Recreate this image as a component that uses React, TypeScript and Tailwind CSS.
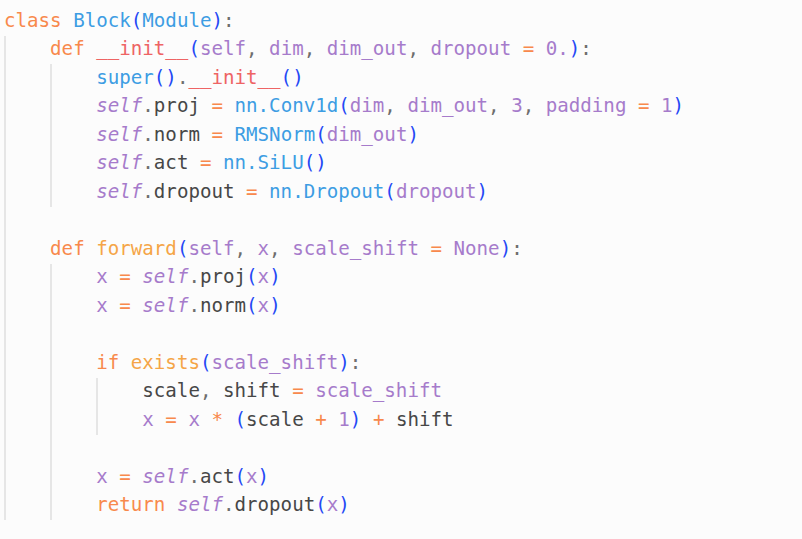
import React from 'react';

type Kind = 'kw' | 'cls' | 'fn' | 'dun' | 'par' | 'var' | 'op' | 'pun' | 'self' | 'attr' | 'sp';

const colors: Record<Kind, string> = {
  kw: 'text-[#f8894c]',
  cls: 'text-[#3d9de3]',
  fn: 'text-[#f5a547]',
  dun: 'text-[#ee6464]',
  par: 'text-[#2448f5]',
  var: 'text-[#a67bcb]',
  op: 'text-[#f8894c]',
  pun: 'text-[#6e6e6e]',
  self: 'text-[#a67bcb] italic',
  attr: 'text-[#474747]',
  sp: '',
};

type Token = [Kind, string];

interface Line {
  guides: number;
  tokens: Token[];
}

const S: Token = ['sp', ' '];
const EQ: Token[] = [S, ['op', '='], S];
const C: Token[] = [['pun', ','], S];

const lines: Line[] = [
  { guides: 0, tokens: [['kw', 'class'], S, ['cls', 'Block'], ['par', '('], ['cls', 'Module'], ['par', ')'], ['pun', ':']] },
  {
    guides: 1,
    tokens: [
      ['kw', 'def'], S, ['dun', '__init__'], ['par', '('], ['var', 'self'], ...C, ['var', 'dim'], ...C,
      ['var', 'dim_out'], ...C, ['var', 'dropout'], ...EQ, ['var', '0.'], ['par', ')'], ['pun', ':'],
    ],
  },
  { guides: 2, tokens: [['cls', 'super'], ['par', '()'], ['pun', '.'], ['dun', '__init__'], ['par', '()']] },
  {
    guides: 2,
    tokens: [
      ['self', 'self'], ['pun', '.'], ['attr', 'proj'], ...EQ, ['cls', 'nn.Conv1d'], ['par', '('], ['var', 'dim'], ...C,
      ['var', 'dim_out'], ...C, ['var', '3'], ...C, ['var', 'padding'], ...EQ, ['var', '1'], ['par', ')'],
    ],
  },
  { guides: 2, tokens: [['self', 'self'], ['pun', '.'], ['attr', 'norm'], ...EQ, ['cls', 'RMSNorm'], ['par', '('], ['var', 'dim_out'], ['par', ')']] },
  { guides: 2, tokens: [['self', 'self'], ['pun', '.'], ['attr', 'act'], ...EQ, ['cls', 'nn.SiLU'], ['par', '()']] },
  { guides: 2, tokens: [['self', 'self'], ['pun', '.'], ['attr', 'dropout'], ...EQ, ['cls', 'nn.Dropout'], ['par', '('], ['var', 'dropout'], ['par', ')']] },
  { guides: 1, tokens: [] },
  {
    guides: 1,
    tokens: [
      ['kw', 'def'], S, ['fn', 'forward'], ['par', '('], ['var', 'self'], ...C, ['var', 'x'], ...C,
      ['var', 'scale_shift'], ...EQ, ['var', 'None'], ['par', ')'], ['pun', ':'],
    ],
  },
  { guides: 2, tokens: [['var', 'x'], ...EQ, ['self', 'self'], ['pun', '.'], ['attr', 'proj'], ['par', '('], ['var', 'x'], ['par', ')']] },
  { guides: 2, tokens: [['var', 'x'], ...EQ, ['self', 'self'], ['pun', '.'], ['attr', 'norm'], ['par', '('], ['var', 'x'], ['par', ')']] },
  { guides: 2, tokens: [] },
  { guides: 2, tokens: [['kw', 'if'], S, ['fn', 'exists'], ['par', '('], ['var', 'scale_shift'], ['par', ')'], ['pun', ':']] },
  { guides: 3, tokens: [['attr', 'scale'], ...C, ['attr', 'shift'], ...EQ, ['var', 'scale_shift']] },
  {
    guides: 3,
    tokens: [
      ['var', 'x'], ...EQ, ['var', 'x'], S, ['op', '*'], S, ['par', '('], ['attr', 'scale'], S, ['op', '+'], S,
      ['var', '1'], ['par', ')'], S, ['op', '+'], S, ['attr', 'shift'],
    ],
  },
  { guides: 2, tokens: [] },
  { guides: 2, tokens: [['var', 'x'], ...EQ, ['self', 'self'], ['pun', '.'], ['attr', 'act'], ['par', '('], ['var', 'x'], ['par', ')']] },
  { guides: 2, tokens: [['kw', 'return'], S, ['self', 'self'], ['pun', '.'], ['attr', 'dropout'], ['par', '('], ['var', 'x'], ['par', ')']] },
];

function CodeLine({ line }: { line: Line }) {
  const indents = Array.from({ length: line.guides });
  return (
    <div className="flex h-[28.5px] items-center whitespace-pre">
      {indents.map((_, i) => (
        <span key={i} className="inline-block h-full w-[4ch] shrink-0 border-l-2 border-[#e6e6e6]" />
      ))}
      {line.tokens.map(([kind, text], i) => (
        <span key={i} className={colors[kind]}>
          {text}
        </span>
      ))}
    </div>
  );
}

export default function App() {
  return (
    <div className="h-[539px] w-[802px] overflow-hidden bg-[#fcfcfc] pl-[4px] pt-[7px] font-['DejaVu_Sans_Mono',monospace] text-[19.15px]">
      {lines.map((line, i) => (
        <CodeLine key={i} line={line} />
      ))}
    </div>
  );
}
